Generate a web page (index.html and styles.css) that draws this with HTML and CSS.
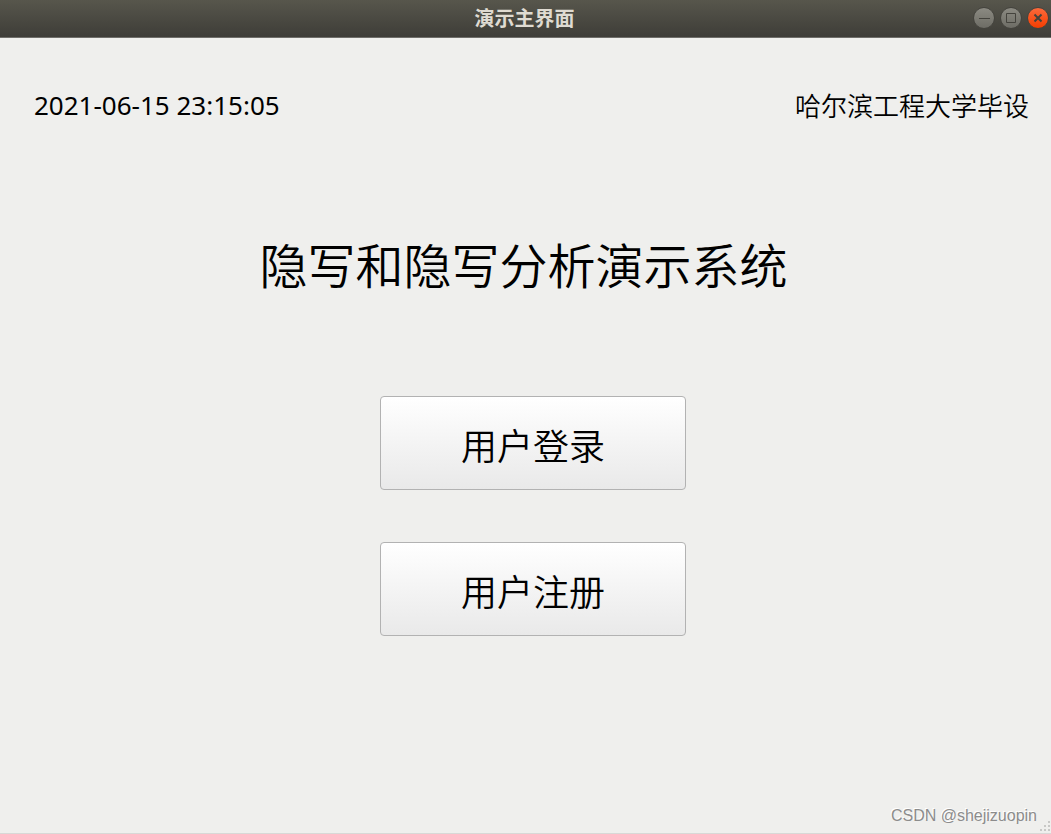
FILE: index.html
```
<!DOCTYPE html>
<html lang="zh-CN">
<head>
<meta charset="UTF-8" />
<meta name="viewport" content="width=device-width, initial-scale=1" />
<title>演示主界面</title>
<link rel="stylesheet" href="styles.css">
</head>
<body>
  <header class="titlebar">
    <span class="titlebar-text">演示主界面</span>
    <div class="window-controls">
      <button class="control" type="button" aria-label="最小化">
        <svg viewBox="0 0 20 20"><path d="M5 10.500h11" /></svg>
      </button>
      <button class="control" type="button" aria-label="最大化">
        <svg viewBox="0 0 20 20"><path d="M5.500 5.500h9v9h-9z" /></svg>
      </button>
      <button class="control control-close" type="button" aria-label="关闭">
        <svg viewBox="0 0 20 20"><path d="M6.500 6.500l7 7M13.500 6.500l-7 7" /></svg>
      </button>
    </div>
  </header>

  <main class="window">
    <div class="info">
      <time class="clock" datetime="2021-06-15T23:15:05">2021-06-15 23:15:05</time>
      <span class="school">哈尔滨工程大学毕设</span>
    </div>

    <h1>隐写和隐写分析演示系统</h1>

    <div class="actions">
      <button class="action" type="button">用户登录</button>
      <button class="action" type="button">用户注册</button>
    </div>
  </main>

  <footer class="statusbar">
    <span class="watermark">CSDN @shejizuopin</span>
    <svg class="grip" viewBox="0 0 12 12" aria-hidden="true">
      <path d="M9 0h2v2h-2zM5 4h2v2h-2zM9 4h2v2h-2zM1 8h2v2h-2zM5 8h2v2h-2zM9 8h2v2h-2z" />
    </svg>
  </footer>
</body>
</html>
```
FILE: styles.css
```
* {
  box-sizing: border-box;
}
body {
  margin: 0;
  min-height: 100vh;
  display: flex;
  flex-direction: column;
  font-family: "Noto Sans CJK SC", sans-serif;
  background: #efefed;
  color: #000;
}
button {
  font-family: inherit;
  cursor: pointer;
}

/* Title bar */
.titlebar {
  display: grid;
  grid-template-columns: 1fr auto 1fr;
  align-items: center;
  height: 38px;
  padding: 0 2px 2px 0;
  background: linear-gradient(#57564c, #3e3d38);
  border-bottom: 1px solid #6f6e6a;
}
.titlebar-text {
  grid-column: 2;
  font-size: 20px;
  font-weight: 700;
  line-height: 28px;
  color: #dfdbd2;
}
.window-controls {
  display: flex;
  justify-content: flex-end;
  gap: 5px;
}
.control {
  width: 22px;
  height: 22px;
  padding: 0;
  border: 1px solid #44433d;
  border-radius: 50%;
  background: linear-gradient(#8b8a82, #6d6c65);
  display: flex;
}
.control svg {
  width: 20px;
  height: 20px;
  fill: none;
  stroke: #44433d;
  stroke-width: 1;
}
.control-close {
  background: linear-gradient(#fb6a3c, #f53d00);
}
.control-close svg {
  stroke-width: 2;
}

/* Content */
.window {
  flex: 1;
  font-weight: 350;
}
.info {
  display: flex;
  justify-content: space-between;
  align-items: center;
  padding: 47px 22px 0 34px;
}
.clock,
.school {
  font-size: 26px;
  line-height: 40px;
}
.clock {
  font-family: "Noto Sans", sans-serif;
  font-weight: 400;
}
h1 {
  margin: 102px 0 0;
  padding-right: 4px;
  font-size: 48px;
  font-weight: inherit;
  line-height: 72px;
  text-align: center;
}
.actions {
  display: flex;
  flex-direction: column;
  align-items: center;
  gap: 52px;
  padding: 97px 0 0 15px;
}
.action {
  width: 306px;
  height: 94px;
  padding: 2px 0 0;
  border: 1px solid #b2b2b2;
  border-radius: 4px;
  background: linear-gradient(#fff, #e9e9e9);
  color: #000;
  font-size: 36px;
  font-weight: inherit;
}

/* Bottom strip */
.statusbar {
  display: flex;
  justify-content: flex-end;
  align-items: flex-end;
  gap: 2px;
  border-bottom: 1px solid #d8d8d6;
}
.watermark {
  padding-bottom: 7px;
  font-family: "Liberation Sans", sans-serif;
  font-size: 16px;
  line-height: 20px;
  color: #8c8c8c;
  text-shadow: -1px -1px 0 #fff;
}
.grip {
  width: 12px;
  height: 12px;
  fill: #c8c8c6;
}
```
